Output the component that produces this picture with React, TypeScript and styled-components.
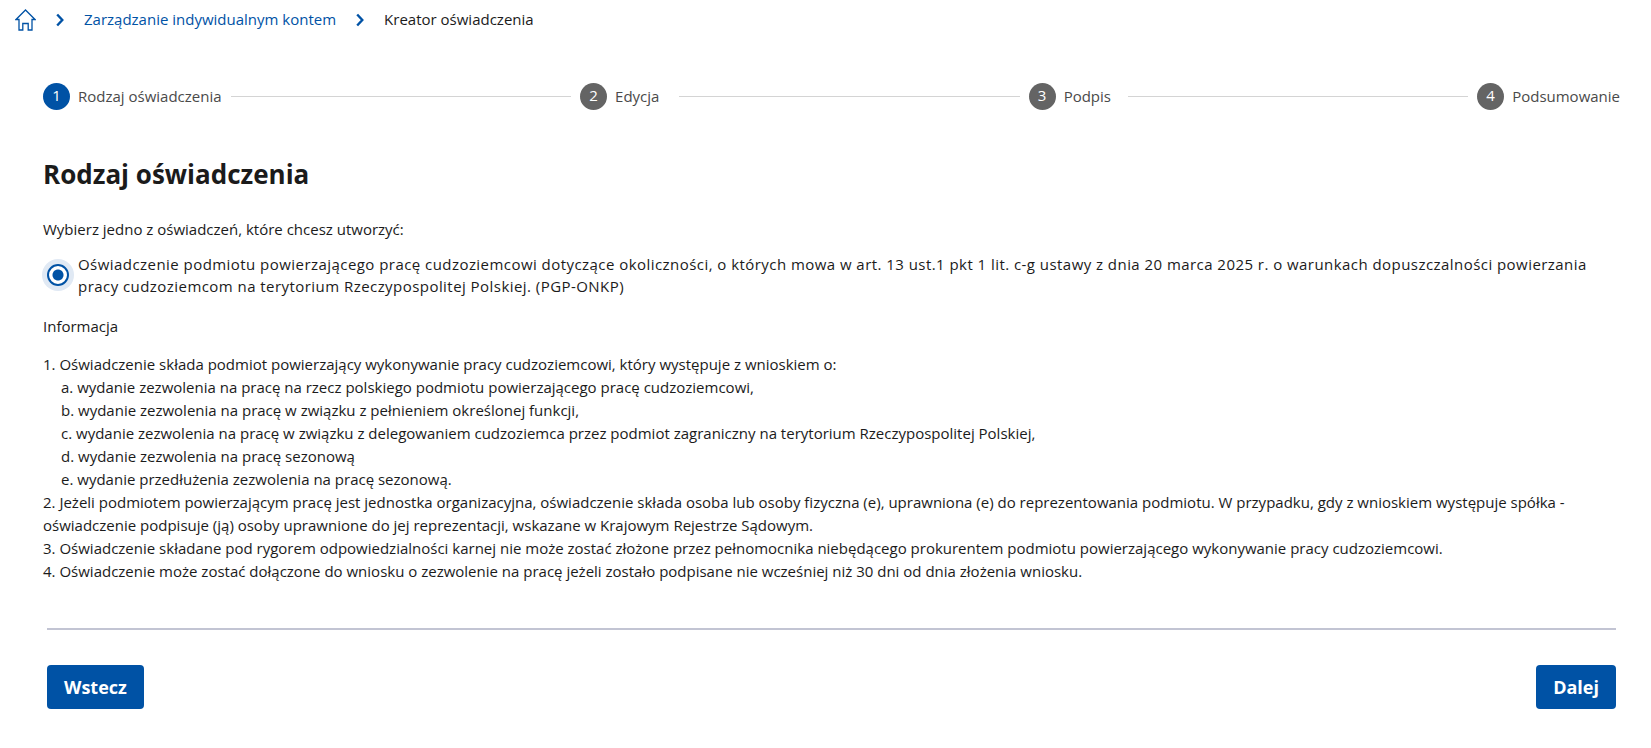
import React, { useState } from "react";
import styled, { createGlobalStyle } from "styled-components";

const GlobalStyle = createGlobalStyle`
  *, *::before, *::after { box-sizing: border-box; }
  body {
    margin: 0;
    background: #fff;
    color: #1b1b1b;
    font-family: "Open Sans", "Noto Sans", sans-serif;
    font-size: 15px;
    line-height: 23px;
  }
`;

const Breadcrumbs = styled.nav`
  padding: 8px 15px;
`;

const Crumbs = styled.ol`
  display: flex;
  align-items: center;
  gap: 20px;
  margin: 0;
  padding: 0;
  list-style: none;
`;

const Crumb = styled.li`
  display: flex;
  align-items: center;
  gap: 20px;
`;

const CrumbLink = styled.a`
  display: flex;
  color: #0052a5;
  text-decoration: none;
`;

const Main = styled.main`
  padding: 44px 31px 32px 43px;
`;

const Stepper = styled.ol`
  display: flex;
  align-items: center;
  gap: 9px;
  margin: 0;
  padding: 0;
  list-style: none;
`;

const Step = styled.li`
  display: flex;
  align-items: center;
  gap: 8px;
  flex: none;
  color: #4a4a4a;
`;

const StepNumber = styled.span<{ $active?: boolean }>`
  flex: none;
  width: 27px;
  height: 27px;
  border-radius: 50%;
  background: ${(p) => (p.$active ? "#0052a5" : "#646464")};
  color: #fff;
  text-align: center;
  line-height: 25px;
`;

const StepLabel = styled.span`
  min-width: 55px;
  white-space: nowrap;
`;

const StepLine = styled.li`
  flex: 1;
  height: 1px;
  background: #d4d4d4;
`;

const Title = styled.h1`
  margin: 46px 0 0;
  font-size: 26px;
  line-height: 36px;
  font-weight: 700;
`;

const Choices = styled.fieldset`
  margin: 26px 0 0;
  padding: 0;
  border: 0;
`;

const Legend = styled.legend`
  padding: 0;
`;

const Choice = styled.label`
  display: flex;
  align-items: center;
  gap: 5px;
  margin-top: 12px;
  line-height: 22px;
`;

const Radio = styled.input`
  appearance: none;
  flex: none;
  width: 22px;
  height: 22px;
  margin: 4px;
  border: 2px solid #0052a5;
  border-radius: 50%;
  background: #fff;

  &:checked {
    background: radial-gradient(circle, #0052a5 5px, #fff 6px);
    box-shadow: 0 0 0 5px #e0e9f4;
  }
`;

const ChoiceText = styled.span`
  letter-spacing: 0.03em;
`;

const InfoHeading = styled.p`
  margin: 18px 0 0;
`;

const List = styled.ol`
  margin: 15px 0 0;
  padding: 0;
  list-style: none;
`;

const SubList = styled.ol`
  margin: 0;
  padding: 0 0 0 18px;
  list-style: none;
`;

const Footer = styled.footer`
  display: flex;
  justify-content: space-between;
  margin: 45px 4px 0;
  padding-top: 35px;
  border-top: 2px solid #c2c4d3;
`;

const Button = styled.button`
  height: 44px;
  padding: 0 17px;
  border: 0;
  border-radius: 4px;
  background: #0052a5;
  color: #fff;
  font: 700 18px/24px "Open Sans", "Noto Sans", sans-serif;
  cursor: pointer;
`;

const HomeIcon = () => (
  <svg width="21" height="22" viewBox="0 0 21 22" fill="none" stroke="#0052a5" strokeWidth="1.3" aria-hidden="true">
    <path d="M1 10.5 10.5 1 20 10.5H17V21H13.2V14.5H7.8V21H4V10.5Z" />
  </svg>
);

const Chevron = () => (
  <svg width="8" height="14" viewBox="0 0 8 14" fill="none" stroke="#0052a5" strokeWidth="2.4" aria-hidden="true">
    <path d="M1.2 1.5 6.3 7 1.2 12.5" />
  </svg>
);

const steps = ["Rodzaj oświadczenia", "Edycja", "Podpis", "Podsumowanie"];

const cases = [
  "wydanie zezwolenia na pracę na rzecz polskiego podmiotu powierzającego pracę cudzoziemcowi,",
  "wydanie zezwolenia na pracę w związku z pełnieniem określonej funkcji,",
  "wydanie zezwolenia na pracę w związku z delegowaniem cudzoziemca przez podmiot zagraniczny na terytorium Rzeczypospolitej Polskiej,",
  "wydanie zezwolenia na pracę sezonową",
  "wydanie przedłużenia zezwolenia na pracę sezonową.",
];

export default function App() {
  const [kind, setKind] = useState("PGP-ONKP");
  return (
    <>
      <GlobalStyle />
      <Breadcrumbs aria-label="Okruszki">
        <Crumbs>
          <Crumb>
            <CrumbLink href="#" aria-label="Strona główna"><HomeIcon /></CrumbLink>
            <Chevron />
          </Crumb>
          <Crumb>
            <CrumbLink href="#">Zarządzanie indywidualnym kontem</CrumbLink>
            <Chevron />
          </Crumb>
          <Crumb aria-current="page">Kreator oświadczenia</Crumb>
        </Crumbs>
      </Breadcrumbs>
      <Main>
        <Stepper>
          {steps.map((name, i) => (
            <React.Fragment key={name}>
              {i > 0 && <StepLine role="presentation" />}
              <Step>
                <StepNumber $active={i === 0}>{i + 1}</StepNumber>
                <StepLabel>{name}</StepLabel>
              </Step>
            </React.Fragment>
          ))}
        </Stepper>
        <Title>Rodzaj oświadczenia</Title>
        <Choices>
          <Legend>Wybierz jedno z oświadczeń, które chcesz utworzyć:</Legend>
          <Choice>
            <Radio
              type="radio"
              name="kind"
              value="PGP-ONKP"
              checked={kind === "PGP-ONKP"}
              onChange={(e) => setKind(e.target.value)}
            />
            <ChoiceText>
              Oświadczenie podmiotu powierzającego pracę cudzoziemcowi dotyczące okoliczności, o których mowa w art. 13 ust.1 pkt 1 lit. c-g ustawy z dnia 20 marca 2025 r. o warunkach dopuszczalności powierzania pracy cudzoziemcom na terytorium Rzeczypospolitej Polskiej. (PGP-ONKP)
            </ChoiceText>
          </Choice>
        </Choices>
        <InfoHeading>Informacja</InfoHeading>
        <List>
          <li>
            1. Oświadczenie składa podmiot powierzający wykonywanie pracy cudzoziemcowi, który występuje z wnioskiem o:
            <SubList>
              {cases.map((text, i) => (
                <li key={text}>{"abcde"[i]}. {text}</li>
              ))}
            </SubList>
          </li>
          <li>
            2. Jeżeli podmiotem powierzającym pracę jest jednostka organizacyjna, oświadczenie składa osoba lub osoby fizyczna (e), uprawniona (e) do reprezentowania podmiotu. W przypadku, gdy z wnioskiem występuje spółka - oświadczenie podpisuje (ją) osoby uprawnione do jej reprezentacji, wskazane w Krajowym Rejestrze Sądowym.
          </li>
          <li>
            3. Oświadczenie składane pod rygorem odpowiedzialności karnej nie może zostać złożone przez pełnomocnika niebędącego prokurentem podmiotu powierzającego wykonywanie pracy cudzoziemcowi.
          </li>
          <li>
            4. Oświadczenie może zostać dołączone do wniosku o zezwolenie na pracę jeżeli zostało podpisane nie wcześniej niż 30 dni od dnia złożenia wniosku.
          </li>
        </List>
        <Footer>
          <Button type="button">Wstecz</Button>
          <Button type="button">Dalej</Button>
        </Footer>
      </Main>
    </>
  );
}
